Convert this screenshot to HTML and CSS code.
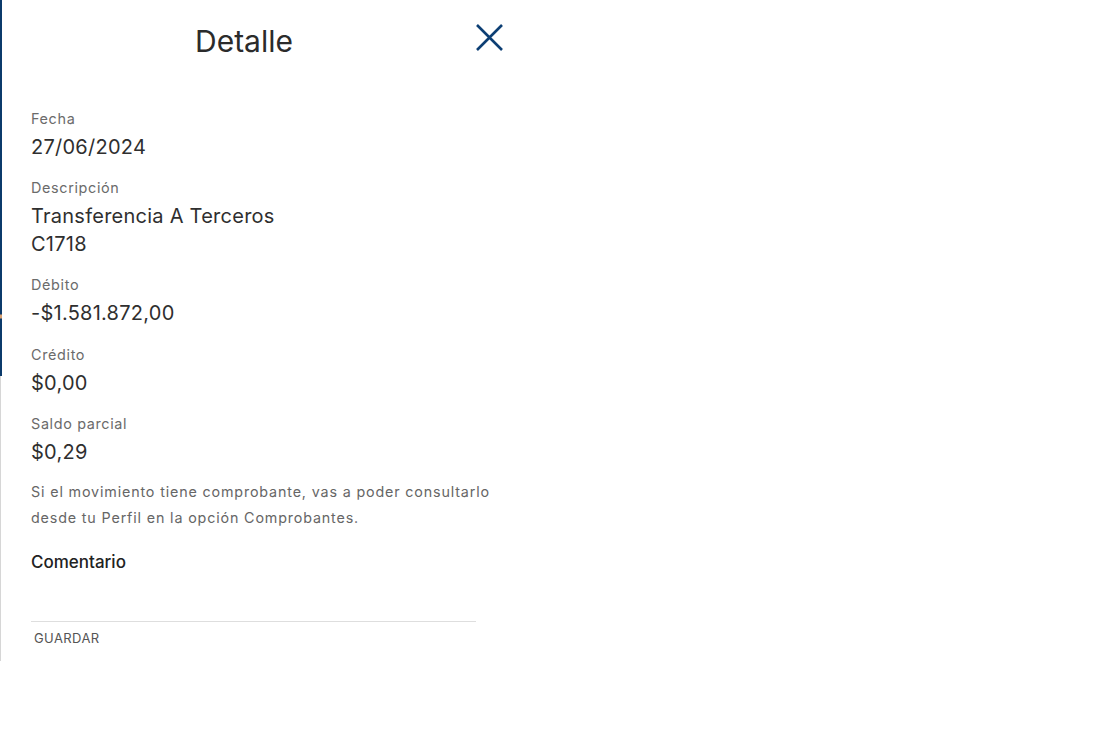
FILE: index.html
```html
<!DOCTYPE html>
<html lang="es">
<head>
<meta charset="utf-8">
<title>Detalle</title>
<link rel="stylesheet" href="styles.css">
</head>
<body>
<div class="page">
  <div class="rail">
    <div class="rail-blue"></div>
    <div class="rail-grey"></div>
  </div>
  <div class="panel">
    <header class="header">
      <h1 class="title">Detalle</h1>
      <button class="close" aria-label="Cerrar">
        <svg width="27" height="27" viewBox="0 0 27 27"><path d="M1 1 L26 26 M26 1 L1 26" stroke="#0d3f74" stroke-width="2.6" fill="none"/></svg>
      </button>
    </header>
    <div class="fields">
      <div class="field">
        <div class="label">Fecha</div>
        <div class="value">27/06/2024</div>
      </div>
      <div class="field">
        <div class="label">Descripción</div>
        <div class="value">Transferencia A Terceros<br>C1718</div>
      </div>
      <div class="field">
        <div class="label">Débito</div>
        <div class="value">-$1.581.872,00</div>
      </div>
      <div class="field">
        <div class="label">Crédito</div>
        <div class="value">$0,00</div>
      </div>
      <div class="field">
        <div class="label">Saldo parcial</div>
        <div class="value">$0,29</div>
      </div>
    </div>
    <p class="note">Si el movimiento tiene comprobante, vas a poder consultarlo desde tu Perfil en la opción Comprobantes.</p>
    <div class="comment">
      <div class="comment-title">Comentario</div>
      <div class="comment-input"></div>
      <button class="save">GUARDAR</button>
    </div>
  </div>
</div>
</body>
</html>
```
FILE: styles.css
```css
html, body {
  margin: 0;
  padding: 0;
  background: #fff;
}
body {
  font-family: Inter, "Noto Sans", sans-serif;
  color: #333;
}
.page {
  display: flex;
  align-items: flex-start;
}
.rail {
  display: flex;
  flex-direction: column;
  width: 2px;
}
.rail-blue {
  width: 2px;
  height: 376px;
  background: linear-gradient(#0b3a6b 0, #0b3a6b 314px, #d9a070 315px, #d9a070 318px, #0b3a6b 319px);
}
.rail-grey {
  width: 1px;
  height: 285px;
  background: #d6d6d6;
}
.panel {
  width: 480px;
  padding-left: 29px;
}
.header {
  display: flex;
  align-items: flex-start;
  height: 108px;
}
.title {
  margin: 23px 0 0 0;
  width: 426px;
  text-align: center;
  font-size: 30px;
  font-weight: 400;
  line-height: 36px;
  color: #2b2b2b;
}
.close {
  margin: 24px 0 0 19px;
  padding: 0;
  border: 0;
  background: none;
  width: 27px;
  height: 27px;
  display: block;
}
.close svg { display: block; }
.fields {
  display: flex;
  flex-direction: column;
  gap: 16.2px;
}
.label {
  padding-top: 1px;
  font-size: 14.4px;
  line-height: 20px;
  color: #6b6b6b;
  letter-spacing: 0.65px;
}
.value {
  margin-top: 4px;
  font-size: 20px;
  line-height: 28px;
  color: #2f2f2f;
  letter-spacing: 0.25px;
}
.note {
  margin: 13px 0 0 0;
  width: 470px;
  font-size: 14.3px;
  line-height: 26px;
  color: #666;
  letter-spacing: 0.85px;
}
.comment {
  margin-top: 19px;
}
.comment-title {
  font-size: 17px;
  font-weight: 500;
  line-height: 24px;
  color: #222;
}
.comment-input {
  margin-top: 47px;
  width: 445px;
  height: 0;
  border-bottom: 1px solid #dedede;
}
.save {
  margin: 6px 0 0 0;
  padding: 0 0 0 3px;
  border: 0;
  background: none;
  font-family: Inter, "Noto Sans", sans-serif;
  font-size: 13px;
  line-height: 20px;
  color: #555;
  letter-spacing: 0.4px;
}
```
